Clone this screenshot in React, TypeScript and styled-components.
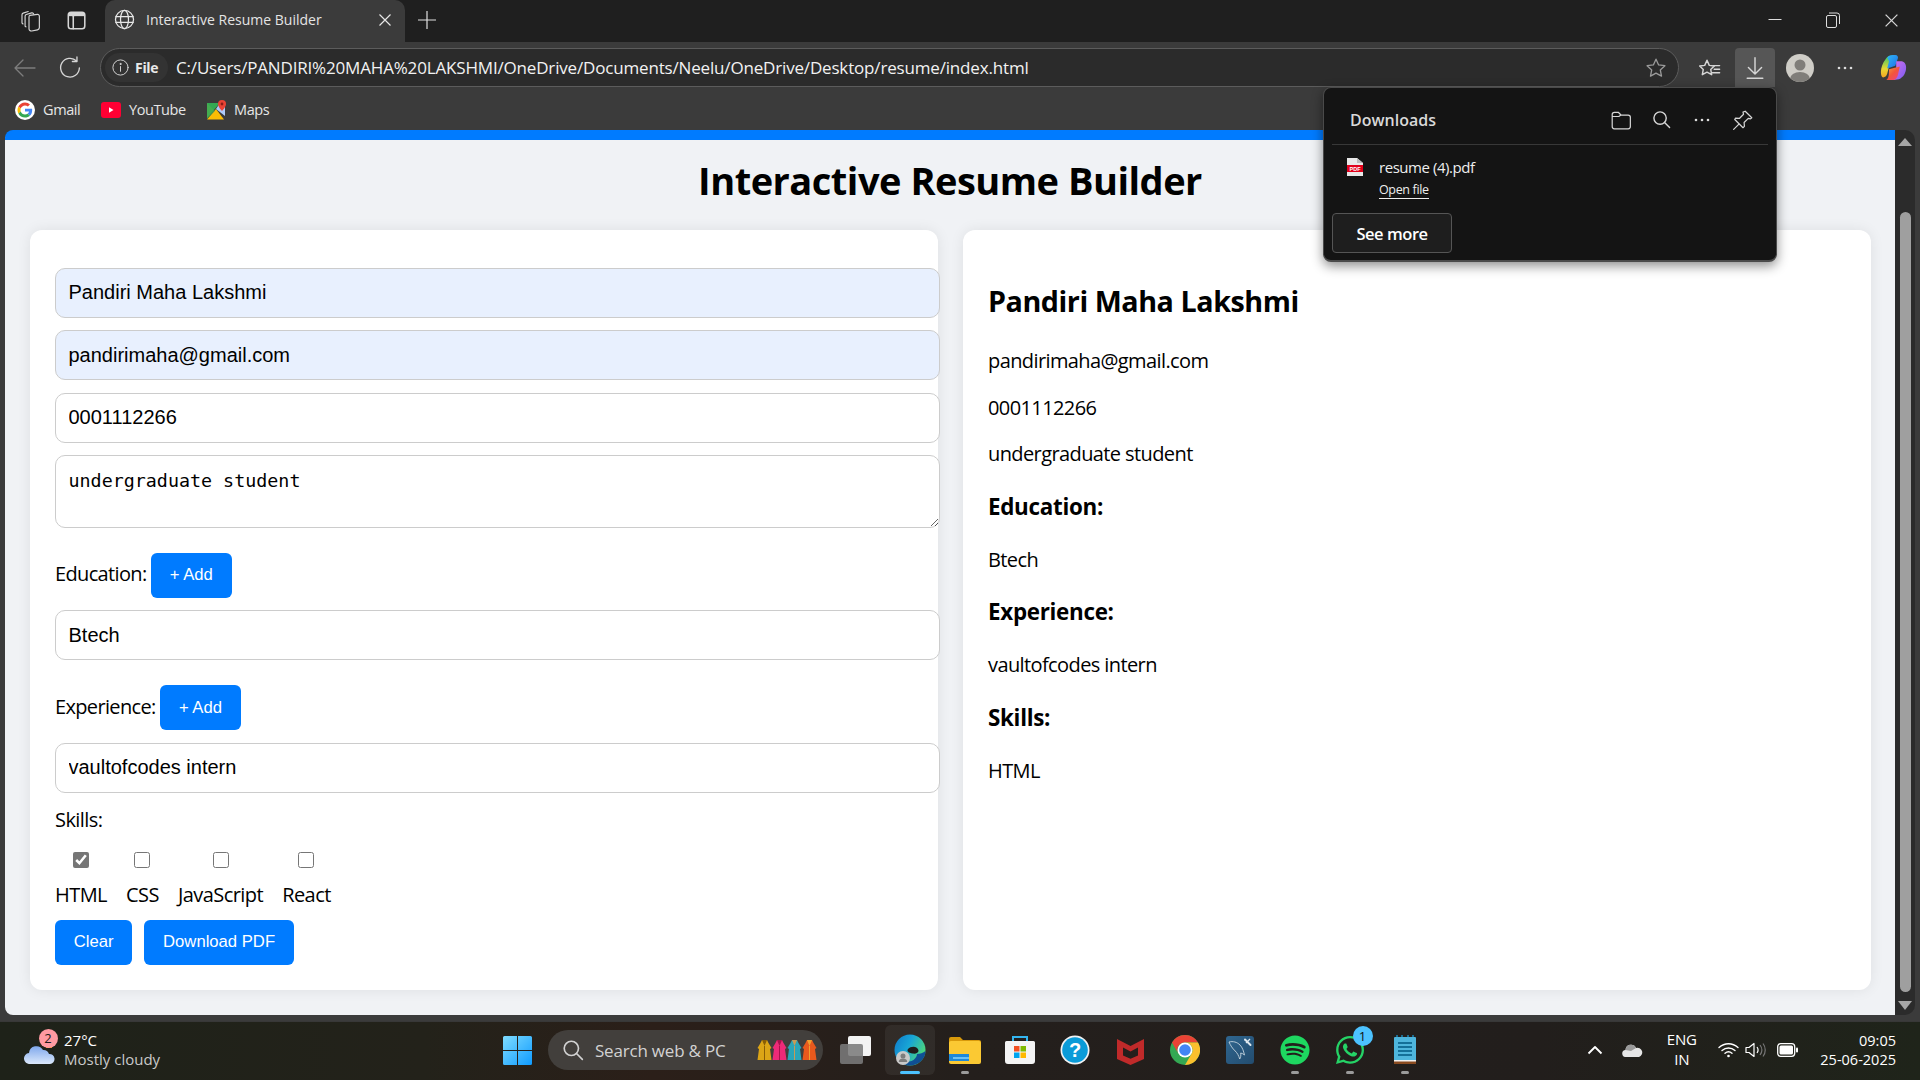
import React from "react";
import styled, { createGlobalStyle } from "styled-components";
import { FaSpotify, FaWhatsapp } from "react-icons/fa";

const UI = `"Open Sans", "Noto Sans", sans-serif`;
const ARIAL = `"Liberation Sans", Arial, sans-serif`;

const Global = createGlobalStyle`
  html, body { margin: 0; padding: 0; background: #1f1f1f; overflow: hidden; }
`;

const Screen = styled.div`
  position: relative;
  width: 1920px;
  height: 1080px;
  overflow: hidden;
  display: flex;
  flex-direction: column;
  font-family: ${UI};
  background: #3b3b3b;
`;

/* ---------- browser chrome ---------- */
const TabStrip = styled.div`
  height: 42px;
  display: flex;
  align-items: flex-start;
  background: #1f1f1f;
  padding-left: 8px;
`;
const Slot = styled.div<{ $w: number; $ml?: number }>`
  width: ${(p) => p.$w}px;
  height: 40px;
  margin-left: ${(p) => p.$ml ?? 0}px;
  flex: none;
  display: flex;
  align-items: center;
  justify-content: center;
  color: #d6d6d6;
`;
const Tab = styled.div`
  width: 300px;
  height: 42px;
  margin-left: 7px;
  padding: 0 13px 3px 9px;
  box-sizing: border-box;
  display: flex;
  align-items: center;
  gap: 11px;
  background: #3b3b3b;
  border-radius: 10px 10px 0 0;
  color: #e6e6e6;
`;
const TabTitle = styled.span`
  font-size: 14px;
  white-space: nowrap;
  color: #e4e4e4;
`;
const TabClose = styled.span`
  margin-left: auto;
  display: flex;
`;
const WindowControls = styled.div`
  margin-left: auto;
  display: flex;
`;
const Toolbar = styled.div`
  height: 47px;
  box-sizing: border-box;
  padding-top: 6px;
  display: flex;
  background: #3b3b3b;
  padding-left: 2px;
`;
const AddressPill = styled.div`
  width: 1579px;
  height: 39px;
  margin-left: 8px;
  box-sizing: border-box;
  border: 1px solid #5c5c5c;
  border-radius: 20px;
  background: #2b2b2b;
  display: flex;
  align-items: center;
  padding-left: 4px;
  padding-right: 11px;
`;
const SiteChip = styled.div`
  height: 29px;
  width: 63px;
  box-sizing: border-box;
  padding-left: 6px;
  border-radius: 15px;
  background: #333333;
  display: flex;
  align-items: center;
  gap: 5px;
  color: #d8d8d8;
`;
const ChipLabel = styled.span`
  font-size: 14px;
  font-weight: 700;
  letter-spacing: -0.3px;
  color: #e8e8e8;
`;
const UrlText = styled.span`
  margin-left: 8px;
  font-size: 17px;
  letter-spacing: -0.17px;
  color: #f2f2f2;
  white-space: nowrap;
`;
const AddressEnd = styled.span`
  margin-left: auto;
  display: flex;
  color: #9a9a9a;
`;
const ToolSlot = styled(Slot)<{ $active?: boolean }>`
  height: 39px;
  border-radius: 4px 4px 0 0;
  background: ${(p) => (p.$active ? "#565656" : "transparent")};
`;
const Bookmarks = styled.div`
  height: 41px;
  display: flex;
  align-items: center;
  padding-left: 15px;
  background: #3b3b3b;
`;
const Bookmark = styled.div<{ $w: number }>`
  width: ${(p) => p.$w}px;
  flex: none;
  display: flex;
  align-items: center;
  gap: 8px;
  font-size: 14.5px;
  letter-spacing: -0.4px;
  color: #e6e6e6;
`;

/* ---------- page ---------- */
const Viewport = styled.div`
  height: 891px;
  display: flex;
  padding-left: 5px;
  background: #3b3b3b;
`;
const Page = styled.main`
  width: 1890px;
  height: 885px;
  box-sizing: border-box;
  border-top: 10px solid #007bff;
  border-radius: 8px 0 0 8px;
  background: #f0f2f5;
  color: #000;
  overflow: hidden;
`;
const Heading = styled.h1`
  margin: 0;
  height: 90px;
  padding-bottom: 11px;
  box-sizing: border-box;
  display: flex;
  align-items: center;
  justify-content: center;
  font-size: 38px;
  font-weight: 700;
  letter-spacing: -0.5px;
`;
const Columns = styled.div`
  display: flex;
  gap: 25px;
  padding: 0 24px 0 25px;
`;
const Card = styled.section`
  flex: 1 1 0;
  min-width: 0;
  height: 760px;
  box-sizing: border-box;
  background: #fff;
  border-radius: 12px;
  box-shadow: 0 0 14px rgba(0, 0, 0, 0.08);
`;
const FormCard = styled(Card)`
  padding: 37.6px 25px 25px;
`;
const PreviewCard = styled(Card)`
  padding: 25px;
`;
const fieldCss = `
  display: block;
  width: 100%;
  box-sizing: content-box;
  padding: 12.5px;
  border: 1px solid #ccc;
  border-radius: 10px;
  margin: 0 0 12.5px;
  color: #000;
  outline: none;
`;
const TextField = styled.input<{ $filled?: boolean }>`
  ${fieldCss}
  height: 23px;
  font-family: ${ARIAL};
  font-size: 20px;
  background: ${(p) => (p.$filled ? "#e8f0fe" : "#fff")};
`;
const TextArea = styled.textarea`
  ${fieldCss}
  height: 46px;
  font-family: "DejaVu Sans Mono", "Liberation Mono", monospace;
  font-size: 18.35px;
  line-height: 23px;
  background: #fff;
  resize: vertical;
`;
const FieldLabel = styled.span`
  font-size: 20px;
  letter-spacing: -0.55px;
  line-height: 27px;
`;
const FieldRow = styled.div`
  margin: 24.75px 0 12.5px;
  display: flex;
  align-items: center;
  gap: 4.5px;

  ${FieldLabel} {
    margin-bottom: 3px;
    letter-spacing: -0.65px;
  }
`;
const Button = styled.button`
  height: 45px;
  padding: 0 18.75px;
  border: 0;
  border-radius: 6px;
  background: #007bff;
  color: #fff;
  font-family: ${ARIAL};
  font-size: 16.67px;
`;
const SkillsHeading = styled(FieldLabel)`
  display: block;
  margin-top: 13.5px;
`;
const SkillRow = styled.div`
  margin-top: 18.5px;
  display: flex;
  gap: 19px;
`;
const SkillItem = styled.label`
  display: flex;
  flex-direction: column;
  align-items: center;
  gap: 13px;
`;
const SkillBox = styled.input`
  width: 16px;
  height: 16px;
  margin: 0;
  accent-color: #767676;
`;
const ActionRow = styled.div`
  margin-top: 12px;
  display: flex;
  gap: 12px;
`;
const PreviewName = styled.h2`
  margin: 26px 0 27px;
  font-size: 28.7px;
  line-height: 40px;
  font-weight: 700;
  letter-spacing: -0.45px;
`;
const PreviewLine = styled.p`
  margin: 20px 0;
  font-size: 20px;
  line-height: 26.6px;
  letter-spacing: -0.6px;
`;
const PreviewHeading = styled.h3`
  margin: 24px 0 25px;
  font-size: 22.4px;
  line-height: 30px;
  font-weight: 700;
  letter-spacing: -0.3px;
`;

/* ---------- scrollbar ---------- */
const Track = styled.div`
  width: 20px;
  height: 885px;
  box-sizing: border-box;
  padding-top: 8px;
  display: flex;
  flex-direction: column;
  align-items: center;
  background: #2b2b2b;
  border-radius: 0 10px 10px 0;
`;
const ArrowUp = styled.div`
  width: 0;
  height: 0;
  border-left: 7px solid transparent;
  border-right: 7px solid transparent;
  border-bottom: 8px solid #a6a6a6;
`;
const ArrowDown = styled.div`
  width: 0;
  height: 0;
  margin-top: 9px;
  border-left: 7px solid transparent;
  border-right: 7px solid transparent;
  border-top: 9px solid #a6a6a6;
`;
const Thumb = styled.div`
  width: 11px;
  height: 780px;
  margin-top: 66px;
  border-radius: 6px;
  background: #9f9f9f;
`;

/* ---------- downloads flyout ---------- */
const Flyout = styled.aside`
  position: absolute;
  left: 1323px;
  top: 87px;
  width: 454px;
  height: 175px;
  box-sizing: border-box;
  padding: 0 8px;
  background: #141414;
  border: 1px solid #4a4a4a;
  border-bottom-width: 2px;
  border-radius: 8px;
  box-shadow: 0 4px 12px rgba(0, 0, 0, 0.45);
  color: #eee;
`;
const FlyoutHead = styled.header`
  height: 57px;
  box-sizing: border-box;
  display: flex;
  align-items: center;
  padding-left: 18px;
  padding-top: 7px;
  border-bottom: 1px solid #383838;
`;
const FlyoutTitle = styled.span`
  margin-top: 1px;
  font-size: 16px;
  font-weight: 600;
  letter-spacing: 0;
  color: #d9d9d9;
`;
const FlyoutTools = styled.div`
  margin-left: auto;
  margin-right: 5px;
  display: flex;
  color: #d6d6d6;
`;
const FlyoutTool = styled.span`
  width: 40.5px;
  display: flex;
  align-items: center;
  justify-content: center;
`;
const FileRow = styled.div`
  height: 68px;
  box-sizing: border-box;
  display: flex;
  gap: 16px;
  padding: 12px 0 0 15px;
`;
const FileInfo = styled.div`
  display: flex;
  flex-direction: column;
  gap: 4px;
`;
const FileName = styled.span`
  font-size: 15px;
  line-height: 20px;
  letter-spacing: -0.45px;
  color: #eee;
`;
const OpenFile = styled.span`
  align-self: flex-start;
  font-size: 12.5px;
  line-height: 17px;
  letter-spacing: -0.35px;
  color: #eee;
  border-bottom: 1px solid #eee;
`;
const SeeMore = styled.button`
  width: 120px;
  height: 40px;
  padding: 0;
  display: block;
  border: 1px solid #555;
  border-radius: 4px;
  background: #1e1e1e;
  color: #fff;
  font-family: ${UI};
  font-size: 16.5px;
  font-weight: 600;
  letter-spacing: -0.45px;
`;

/* ---------- taskbar ---------- */
const Taskbar = styled.footer`
  height: 59px;
  box-sizing: border-box;
  border-top: 1px solid #383838;
  padding-bottom: 2px;
  display: flex;
  align-items: center;
  background: linear-gradient(90deg, #1e2219 0%, #23221a 22%, #2b1f19 34%, #241f1c 50%, #221e1c 80%, #1f241a 100%);
  color: #fff;
`;
const Weather = styled.div`
  width: 490px;
  flex: none;
  display: flex;
  align-items: center;
  gap: 9px;
  padding-left: 24px;
  box-sizing: border-box;
`;
const WeatherIcon = styled.div`
  position: relative;
  width: 31px;
  height: 36px;
  box-sizing: border-box;
  padding-bottom: 4px;
  display: flex;
  align-items: flex-end;
`;
const AlertBadge = styled.span`
  position: absolute;
  left: 14.5px;
  top: -3px;
  width: 19px;
  height: 19px;
  border-radius: 50%;
  background: #ff9aa2;
  color: #1a1a1a;
  font-size: 13px;
  line-height: 19px;
  text-align: center;
`;
const WeatherText = styled.div`
  display: flex;
  flex-direction: column;
  font-size: 15px;
  line-height: 19.5px;
`;
const Dim = styled.span`
  color: #c9c9c9;
`;
const SearchBox = styled.div`
  width: 275px;
  height: 40px;
  margin-left: 3px;
  margin-right: 4.5px;
  box-sizing: border-box;
  padding: 0 6px 0 14px;
  flex: none;
  display: flex;
  align-items: center;
  gap: 11px;
  border-radius: 20px;
  background: #423f3c;
  color: #d2d2d2;
  font-size: 17px;
  letter-spacing: -0.2px;
  white-space: nowrap;
`;
const Robes = styled.span`
  margin-left: auto;
  display: flex;
`;
const AppSlot = styled.div<{ $active?: boolean }>`
  position: relative;
  width: ${(p) => (p.$active ? 50 : 55)}px;
  margin: 0 ${(p) => (p.$active ? 2.5 : 0)}px;
  height: 50px;
  flex: none;
  display: flex;
  align-items: center;
  justify-content: center;
  border-radius: 6px;
  background: ${(p) => (p.$active ? "rgba(255,255,255,.06)" : "transparent")};
`;
const RunDot = styled.span<{ $active?: boolean }>`
  position: absolute;
  left: 50%;
  bottom: 1px;
  transform: translateX(-50%);
  width: ${(p) => (p.$active ? 20 : 8)}px;
  height: 3px;
  border-radius: 2px;
  background: ${(p) => (p.$active ? "#4cc2ff" : "#9b9b9b")};
`;
const CountBadge = styled.span`
  position: absolute;
  right: 5px;
  top: 1px;
  width: 20px;
  height: 20px;
  border-radius: 50%;
  background: #4cc2ff;
  color: #111;
  font-size: 13px;
  line-height: 20px;
  text-align: center;
`;
const Tray = styled.div`
  margin-left: auto;
  padding-right: 24px;
  display: flex;
  align-items: center;
  color: #fff;
`;
const TraySlot = styled.span<{ $w: number }>`
  width: ${(p) => p.$w}px;
  display: flex;
  justify-content: center;
  flex: none;
`;
const LangBlock = styled.div`
  width: 44px;
  text-align: center;
  font-size: 15px;
  line-height: 20px;
  letter-spacing: -0.2px;
  margin: 0 11px 0 7px;
  padding-bottom: 2px;
`;
const Clock = styled.div`
  margin-left: 13.5px;
  text-align: right;
  font-size: 14.5px;
  line-height: 19.5px;
`;

/* ---------- icons ---------- */
type P = { s?: number };
const Line = ({ s = 20, children, w = 1.2 }: P & { children: React.ReactNode; w?: number }) => (
  <svg width={s} height={s} viewBox="0 0 20 20" fill="none" stroke="currentColor" strokeWidth={w} strokeLinecap="round" strokeLinejoin="round">
    {children}
  </svg>
);
const Collections = () => (
  <Line s={23} w={1}>
    <path d="M9.500 5.500l6.500-.8a1.500 1.500 0 0 1 1.700 1.500v10a2 2 0 0 1-1.600 1.900l-5 1a2 2 0 0 1-2.400-2V7a1.500 1.500 0 0 1 .8-1.500z" />
    <path d="M6 15.500 5.300 15V6.200A1.500 1.500 0 0 1 6.300 4.800L11 3.400a1.500 1.500 0 0 1 1.800 1" />
    <path d="M3.500 13 2.600 12.200V5a1.500 1.500 0 0 1 1-1.400L8 2.200" />
  </Line>
);
const VerticalTabs = () => (
  <Line s={22} w={1.4}>
    <rect x="3" y="3" width="15" height="15" rx="2.500" />
    <path d="M7.500 6.500V18" />
    <path d="M3.500 3.500h14v3h-14z" fill="currentColor" stroke="none" />
  </Line>
);
const Globe = () => (
  <Line s={21}>
    <circle cx="10" cy="10" r="8.600" />
    <ellipse cx="10" cy="10" rx="3.800" ry="8.600" />
    <path d="M1.800 7.200h16.400M1.800 12.800h16.400" />
  </Line>
);
const XMark = ({ s = 14 }: P) => (
  <svg width={s} height={s} viewBox="0 0 14 14" stroke="currentColor" strokeWidth="1.200" fill="none">
    <path d="M1.500 1.500l11 11M12.500 1.500l-11 11" />
  </svg>
);
const Plus = () => (
  <svg width="18" height="18" viewBox="0 0 18 18" stroke="#e0e0e0" strokeWidth="1.200">
    <path d="M9 0v18M0 9h18" />
  </svg>
);
const Minimize = () => (
  <svg width="14" height="14" viewBox="0 0 14 14" stroke="#ddd" strokeWidth="1">
    <path d="M0.500 6.500h13" />
  </svg>
);
const Restore = () => (
  <svg width="14" height="16" viewBox="0 0 14 16" stroke="#ddd" strokeWidth="1" fill="none">
    <rect x="0.500" y="3.500" width="10" height="12" rx="1.500" />
    <path d="M3 1h8a2.500 2.500 0 0 1 2.500 2.500V12" />
  </svg>
);
const Back = () => (
  <svg width="22" height="18" viewBox="0 0 22 18" stroke="#7d7d7d" strokeWidth="1.300" fill="none" strokeLinecap="round" strokeLinejoin="round">
    <path d="M21 9H1M9 1 1 9l8 8" />
  </svg>
);
const Reload = () => (
  <Line s={24} w={1.100}>
    <path d="M15.500 4.200A7.800 7.800 0 1 0 17.800 10" />
    <path d="M15.800 0.800v3.800H12" />
  </Line>
);
const Info = () => (
  <Line s={19} w={1}>
    <circle cx="10" cy="10" r="8" />
    <path d="M10 9v5" />
    <circle cx="10" cy="6.300" r=".6" fill="currentColor" />
  </Line>
);
const StarPath = "M10 2l2.400 5.200 5.700.7-4.200 3.900 1.100 5.600L10 14.700l-5 2.700 1.100-5.600L1.900 7.900l5.700-.7z";
const Star = () => (
  <Line s={22}>
    <path d={StarPath} />
  </Line>
);
const Favorites = () => (
  <Line s={24} w={1.200}>
    <path d="M8.500 3l1.900 4.300 4.200.5-3 2.900.8 4.400-3.900-2.100-3.900 2.100.8-4.400-3-2.900 4.200-.5z" transform="translate(-1 0.500)" />
    <path d="M13 8h5M13.500 11h4.500M12 14h6" />
  </Line>
);
const DownArrow = () => (
  <Line s={24} w={1.200}>
    <path d="M10 1.500v13M4.500 9.500l5.500 5.500 5.500-5.500M3.500 18.500h13" />
  </Line>
);
const Avatar = () => (
  <svg width="28" height="28" viewBox="0 0 28 28">
    <defs>
      <clipPath id="av">
        <circle cx="14" cy="14" r="14" />
      </clipPath>
    </defs>
    <circle cx="14" cy="14" r="14" fill="#cfcdc7" />
    <g clipPath="url(#av)" fill="#807e7a">
      <circle cx="14" cy="11" r="5.500" />
      <ellipse cx="14" cy="25" rx="10" ry="7" />
    </g>
  </svg>
);
const Dots = ({ s = 18, c = "#ddd" }: P & { c?: string }) => (
  <svg width={s} height="4" viewBox="0 0 18 4" fill={c}>
    <circle cx="3" cy="2" r="1.300" />
    <circle cx="9" cy="2" r="1.300" />
    <circle cx="15" cy="2" r="1.300" />
  </svg>
);
const Copilot = () => (
  <svg width="27" height="27" viewBox="0 0 30 30">
    <defs>
      <linearGradient id="c1" x1="0" y1="0" x2="1" y2="1">
        <stop offset="0" stopColor="#2fb7f5" />
        <stop offset="1" stopColor="#1e6ee8" />
      </linearGradient>
      <linearGradient id="c2" x1="0" y1="0" x2="0" y2="1">
        <stop offset="0" stopColor="#36c46b" />
        <stop offset=".6" stopColor="#e8d832" />
        <stop offset="1" stopColor="#f5a623" />
      </linearGradient>
      <linearGradient id="c3" x1="0" y1="0" x2="1" y2="1">
        <stop offset="0" stopColor="#d070ee" />
        <stop offset="1" stopColor="#7a5cf0" />
      </linearGradient>
      <linearGradient id="c4" x1="0" y1="0" x2="1" y2="1">
        <stop offset="0" stopColor="#f7a33c" />
        <stop offset=".5" stopColor="#f2553a" />
        <stop offset="1" stopColor="#ee3e8c" />
      </linearGradient>
    </defs>
    <path d="M1 20c0-5 2-10 5-14 1.500-2 3-4 5-4h2l-5 20c-.7 2.500-2.500 4-4.500 4C2 26 1 23.500 1 20z" fill="url(#c2)" />
    <path d="M8 4c1.500-2 3-3 6-3h3c2.500 0 3.500 2 2.800 4L17 13l-9 3 2-8z" fill="url(#c1)" />
    <path d="M18 8h5c4 0 6 3 6 7 0 6-3 11-8 13l-6 1 3-12z" fill="url(#c3)" />
    <path d="M10 17l12-3-2 9c-.7 3-3 6-6 6H7c3-2 3-7 3-12z" fill="url(#c4)" />
  </svg>
);
const GoogleG = () => (
  <svg width="20" height="20" viewBox="0 0 48 48">
    <circle cx="24" cy="24" r="24" fill="#fff" />
    <g transform="translate(6 6) scale(.75)">
      <path fill="#EA4335" d="M24 9.500c3.500 0 6.600 1.200 9.100 3.600l6.800-6.800C35.800 2.400 30.300 0 24 0 14.600 0 6.500 5.400 2.600 13.200l7.900 6.100C12.400 13.700 17.700 9.500 24 9.500z" />
      <path fill="#4285F4" d="M46.900 24.500c0-1.600-.1-3.100-.4-4.500H24v9h12.900c-.6 3-2.200 5.500-4.700 7.200l7.600 5.900c4.500-4.100 7.100-10.200 7.100-17.600z" />
      <path fill="#FBBC05" d="M10.500 28.700c-.5-1.400-.8-3-.8-4.700s.3-3.200.8-4.700l-7.900-6.100C1 16.400 0 20.100 0 24s1 7.600 2.600 10.800z" />
      <path fill="#34A853" d="M24 48c6.500 0 11.900-2.100 15.900-5.800l-7.600-5.900c-2.100 1.400-4.900 2.300-8.300 2.300-6.300 0-11.600-4.200-13.500-9.900l-7.900 6.100C6.500 42.600 14.600 48 24 48z" />
    </g>
  </svg>
);
const YouTube = () => (
  <svg width="20" height="16" viewBox="0 0 20 16">
    <rect width="20" height="16" rx="3" fill="#ff0033" />
    <path d="M8 5.300v5.400L12.500 8z" fill="#fff" />
  </svg>
);
const MapsIcon = () => (
  <svg width="19" height="20" viewBox="0 0 19 20">
    <path d="M0 3h13L0 18z" fill="#34a853" />
    <path d="M0 19.500 9 9l8 10.500z" fill="#fbbc05" />
    <path d="M0 3l8 8-8 8z" fill="#4caf50" opacity=".7" />
    <path d="M9 9l4-6h5v13z" fill="#aecbfa" />
    <path d="M15 0a4 4 0 0 0-4 4c0 3 4 7 4 7s4-4 4-7a4 4 0 0 0-4-4z" fill="#ea4335" />
    <circle cx="15" cy="4" r="1.400" fill="#8c1d18" />
  </svg>
);
const Folder = () => (
  <Line s={22} w={1.100}>
    <path d="M2 5a2 2 0 0 1 2-2h3.500L10 5.500h6.500a2 2 0 0 1 2 2V16a2 2 0 0 1-2 2H4a2 2 0 0 1-2-2zM2 6.800h6l2-1.300" />
  </Line>
);
const SearchGlass = ({ s = 20 }: P) => (
  <Line s={s} w={1.500}>
    <circle cx="8.500" cy="8.500" r="6.500" />
    <path d="M13.200 13.200 18.500 18.500" />
  </Line>
);
const Pin = () => (
  <Line s={22} w={1.100}>
    <path d="M12.500 1.500l6 6-1.200 1-2-.5-3.800 3.800.3 3.500-1.300 1.200-7.500-7.500L3.700 7.800l3.500.3L11 4.300l-.5-2z" transform="translate(-0.500 0.500)" />
    <path d="M6.300 13.700 1.500 18.500" />
  </Line>
);
const PdfFile = () => (
  <svg width="16" height="20" viewBox="0 0 16 20">
    <path d="M0 1h10l6 5v13H0z" fill="#e8e8e8" />
    <path d="M10 1l6 5h-6z" fill="#bbb" />
    <rect y="8" width="16" height="7" fill="#e2001a" />
    <text x="8" y="14" textAnchor="middle" fontSize="5.500" fill="#fff" fontFamily={ARIAL} fontWeight="700">PDF</text>
  </svg>
);
const Cloud = () => (
  <svg width="31" height="24" viewBox="0 0 31 24">
    <defs>
      <linearGradient id="cl" x1="0" y1="0" x2="0" y2="1">
        <stop offset="0" stopColor="#7fa8ec" />
        <stop offset="1" stopColor="#dbe8fb" />
      </linearGradient>
    </defs>
    <rect x="22" y="2" width="6" height="6" fill="#f08a24" />
    <path d="M6 24a5.500 5.500 0 0 1-1-11 7.500 7.500 0 0 1 14-3 6 6 0 0 1 6 4 5 5 0 0 1 1 10z" fill="url(#cl)" />
  </svg>
);
const WinLogo = () => (
  <svg width="29" height="29" viewBox="0 0 29 29">
    <defs>
      <linearGradient id="w" x1="0" y1="0" x2="1" y2="1">
        <stop offset="0" stopColor="#7fdcff" />
        <stop offset="1" stopColor="#0f9bff" />
      </linearGradient>
    </defs>
    <path d="M0 1.500A1.500 1.500 0 0 1 1.500 0H14v14H0zM15 0h12.500A1.500 1.500 0 0 1 29 1.500V14H15zM0 15h14v14H1.500A1.500 1.500 0 0 1 0 27.500zM15 15h14v12.500a1.500 1.500 0 0 1-1.500 1.500H15z" fill="url(#w)" />
  </svg>
);
const Robe = ({ c, d }: { c: string; d: string }) => (
  <svg width="15" height="22" viewBox="0 0 15 22">
    <path d="M5 1h5l1.500 3 3 5-1.500 1 1.500 11H.500L2 10 .500 9l3-5z" fill={c} />
    <path d="M5 1h5L7.500 7zM7 7h1v14H7z" fill={d} />
  </svg>
);
const TaskView = () => (
  <svg width="31" height="28" viewBox="0 0 31 28">
    <rect x="8" y="0" width="23" height="20" rx="2" fill="#f3f3f3" />
    <rect x="0" y="8" width="23" height="20" rx="2" fill="#7b7b7b" fillOpacity=".88" />
  </svg>
);
const Edge = () => (
  <svg width="32" height="32" viewBox="0 0 32 32">
    <defs>
      <linearGradient id="e1" x1="0" y1="0" x2="1" y2=".5">
        <stop offset="0" stopColor="#0f79c9" />
        <stop offset=".5" stopColor="#18a5d6" />
        <stop offset="1" stopColor="#4dd77c" />
      </linearGradient>
      <linearGradient id="e2" x1="0" y1="0" x2="1" y2="1">
        <stop offset="0" stopColor="#0c59a4" />
        <stop offset="1" stopColor="#114a8b" />
      </linearGradient>
    </defs>
    <circle cx="16" cy="16" r="15.500" fill="url(#e1)" />
    <path d="M31.500 17c0 8-7 14.500-15.500 14.500-4 0-8-2-10-5 5 2 12 2 15-2 1-1 2-3 2-4.500 3 0 6-1 8.500-3z" fill="url(#e2)" />
    <path d="M14 15c3-3.500 10-3 10.500 1.500.3 2.500-3 3.500-6 3-4-.5-6-2.500-4.500-4.500z" fill="#1f1d1c" />
    <circle cx="9" cy="24" r="7" fill="#c9c9c9" />
    <circle cx="9" cy="22" r="2.500" fill="#7d7d7d" />
    <path d="M4.800 28a4.200 3.500 0 0 1 8.400 0z" fill="#7d7d7d" />
  </svg>
);
const Explorer = () => (
  <svg width="32" height="28" viewBox="0 0 32 28">
    <path d="M0 3a2 2 0 0 1 2-2h9l3 3h16a2 2 0 0 1 2 2v3H0z" fill="#d99a0b" />
    <rect y="5" width="32" height="23" rx="2" fill="#fbc933" />
    <rect x="0" y="18" width="20" height="7" fill="#1e88d9" />
    <rect x="4" y="21" width="16" height="2" fill="#6bc1f5" />
  </svg>
);
const Store = () => (
  <svg width="30" height="30" viewBox="0 0 30 30">
    <path d="M8 7V2h14v5" fill="none" stroke="#33b5f0" strokeWidth="2" />
    <path d="M0 7.500A1.500 1.500 0 0 1 1.500 6h27A1.500 1.500 0 0 1 30 7.500V26a3 3 0 0 1-3 3H3a3 3 0 0 1-3-3z" fill="#f4f4f4" />
    <rect x="9" y="11" width="5.500" height="5.500" fill="#f25022" />
    <rect x="15.500" y="11" width="5.500" height="5.500" fill="#7fba00" />
    <rect x="9" y="17.500" width="5.500" height="5.500" fill="#00a4ef" />
    <rect x="15.500" y="17.500" width="5.500" height="5.500" fill="#ffb900" />
  </svg>
);
const Help = () => (
  <svg width="30" height="30" viewBox="0 0 30 30">
    <circle cx="15" cy="15" r="14.500" fill="#f2f2f2" />
    <circle cx="15" cy="15" r="12.800" fill="#0a9bd8" />
    <text x="15" y="22" textAnchor="middle" fontSize="20" fontWeight="700" fill="#fff" fontFamily={ARIAL}>?</text>
  </svg>
);
const McAfee = () => (
  <svg width="27" height="30" viewBox="0 0 27 30">
    <path d="M0 4l13.500 7L27 4v20l-13.500 6L0 24zM6 12.500v8l7.500 3.300 7.500-3.300v-8l-7.500 4z" fill="#c02a2a" fillRule="evenodd" />
  </svg>
);
const Chrome = () => (
  <svg width="30" height="30" viewBox="0 0 30 30">
    <circle cx="15" cy="15" r="15" fill="#34a853" />
    <path d="M15 0a15 15 0 0 1 13 7.500H15A7.500 7.500 0 0 0 8.500 19L2 7.500A15 15 0 0 1 15 0z" fill="#ea4335" />
    <path d="M28 7.500A15 15 0 0 1 15 30l6.500-11.200A7.500 7.500 0 0 0 15 7.500z" fill="#fbc02d" />
    <circle cx="15" cy="15" r="7.500" fill="#fff" />
    <circle cx="15" cy="15" r="5.800" fill="#4285f4" />
  </svg>
);
const MySqlTile = () => (
  <svg width="28" height="28" viewBox="0 0 28 28">
    <defs>
      <linearGradient id="my" x1="0" y1="0" x2="1" y2="1">
        <stop offset="0" stopColor="#2f6690" />
        <stop offset="1" stopColor="#234c6e" />
      </linearGradient>
    </defs>
    <rect width="28" height="28" rx="3" fill="url(#my)" />
    <path d="M3 6c4-1 8 0 11 3 2.500 2.500 3.500 6 4.500 10-1.200-1-2.500-1.800-3.800-2 .3 2.500 0 4.500-1 6-1-3.500-2.500-6-4.500-8C6.500 12.500 4.500 9.500 3 6z" fill="none" stroke="#c6d6e0" strokeWidth=".9" />
    <path d="M19 3.500l5.500 5.500" stroke="#dfe8ee" strokeWidth="2" strokeLinecap="round" />
    <path d="M24 3l-4 4" stroke="#dfe8ee" strokeWidth="1.200" />
  </svg>
);
const Notepad = () => (
  <svg width="22" height="30" viewBox="0 0 22 30">
    <rect y="2" width="22" height="25" rx="1" fill="#4eb5dc" />
    <rect y="26" width="22" height="3" fill="#8a4b20" />
    <rect y="25" width="22" height="1.500" fill="#f1f1f1" />
    <path d="M3 2V0M8 2V0M14 2V0M19 2V0" stroke="#1d6c8f" strokeWidth="2" />
    <path d="M4 8h14M4 12h14M4 16h14M4 20h14" stroke="#136f98" strokeWidth="1.800" />
  </svg>
);
const Chevron = () => (
  <svg width="16" height="10" viewBox="0 0 16 10" stroke="#fff" strokeWidth="1.800" fill="none" strokeLinejoin="round">
    <path d="M1.500 8.500 8 2l6.500 6.500" />
  </svg>
);
const OneDrive = () => (
  <svg width="21" height="14" viewBox="0 0 21 14">
    <path d="M4 14a3.500 3.500 0 0 1-.5-7A5.500 5.500 0 0 1 14 5a4.500 4.500 0 0 1 3 9z" fill="#e6e6e6" />
    <path d="M3.500 7A5.500 5.500 0 0 1 14 5L9 8z" fill="#9a9a9a" />
  </svg>
);
const Wifi = () => (
  <svg width="21" height="16" viewBox="0 0 21 16" stroke="#fff" fill="none" strokeWidth="1.400" strokeLinecap="round">
    <path d="M1 5.500c5.500-5 13.500-5 19 0M4 8.500c3.800-3.300 9.200-3.300 13 0M7 11.300c2-1.700 5-1.700 7 0" />
    <circle cx="10.500" cy="14" r="1.300" fill="#fff" stroke="none" />
  </svg>
);
const Volume = () => (
  <svg width="21" height="18" viewBox="0 0 21 18" fill="none" stroke="#fff" strokeWidth="1.200" strokeLinejoin="round">
    <path d="M1 6.500h3L9 2.500v13l-5-4H1z" />
    <path d="M12 6c1.300 1.800 1.300 4.200 0 6" />
    <path d="M15 4c2.300 3 2.300 7 0 10M18 2.500c3 3.800 3 9.200 0 13" stroke="#777" />
  </svg>
);
const Battery = () => (
  <svg width="21" height="14" viewBox="0 0 21 14">
    <rect x=".7" y=".7" width="17" height="12.600" rx="3" fill="none" stroke="#fff" strokeWidth="1.300" />
    <rect x="2.500" y="2.500" width="13.500" height="9" rx="1.500" fill="#fff" />
    <rect x="19" y="4.500" width="2" height="5" rx="1" fill="#fff" />
  </svg>
);

const skills = [
  { name: "HTML", checked: true },
  { name: "CSS", checked: false },
  { name: "JavaScript", checked: false },
  { name: "React", checked: false },
];

const robes = [
  ["#dca516", "#8a5e05"],
  ["#ee2a78", "#a8124c"],
  ["#2aa5b8", "#c79a55"],
  ["#e8591d", "#f0a030"],
];

export default function App() {
  return (
    <Screen>
      <Global />
      <TabStrip>
        <Slot $w={45}><Collections /></Slot>
        <Slot $w={45}><VerticalTabs /></Slot>
        <Tab>
          <Globe />
          <TabTitle>Interactive Resume Builder</TabTitle>
          <TabClose><XMark /></TabClose>
        </Tab>
        <Slot $w={44}><Plus /></Slot>
        <WindowControls>
          <Slot $w={58}><Minimize /></Slot>
          <Slot $w={58}><Restore /></Slot>
          <Slot $w={58}><XMark s={15} /></Slot>
        </WindowControls>
      </TabStrip>

      <Toolbar>
        <ToolSlot $w={45}><Back /></ToolSlot>
        <ToolSlot $w={45}><Reload /></ToolSlot>
        <AddressPill>
          <SiteChip>
            <Info />
            <ChipLabel>File</ChipLabel>
          </SiteChip>
          <UrlText>C:/Users/PANDIRI%20MAHA%20LAKSHMI/OneDrive/Documents/Neelu/OneDrive/Desktop/resume/index.html</UrlText>
          <AddressEnd><Star /></AddressEnd>
        </AddressPill>
        <ToolSlot $w={45} $ml={8}><Favorites /></ToolSlot>
        <ToolSlot $w={40} $ml={3} $active><DownArrow /></ToolSlot>
        <ToolSlot $w={50}><Avatar /></ToolSlot>
        <ToolSlot $w={40}><Dots /></ToolSlot>
        <ToolSlot $w={50} $ml={3}><Copilot /></ToolSlot>
      </Toolbar>

      <Bookmarks>
        <Bookmark $w={86}><GoogleG />Gmail</Bookmark>
        <Bookmark $w={106}><YouTube />YouTube</Bookmark>
        <Bookmark $w={80}><MapsIcon />Maps</Bookmark>
      </Bookmarks>

      <Viewport>
        <Page>
          <Heading>Interactive Resume Builder</Heading>
          <Columns>
            <FormCard>
              <TextField $filled readOnly value="Pandiri Maha Lakshmi" />
              <TextField $filled readOnly value="pandirimaha@gmail.com" />
              <TextField readOnly value="0001112266" />
              <TextArea readOnly value="undergraduate student" />
              <FieldRow>
                <FieldLabel>Education:</FieldLabel>
                <Button>+ Add</Button>
              </FieldRow>
              <TextField readOnly value="Btech" />
              <FieldRow>
                <FieldLabel>Experience:</FieldLabel>
                <Button>+ Add</Button>
              </FieldRow>
              <TextField readOnly value="vaultofcodes intern" />
              <SkillsHeading>Skills:</SkillsHeading>
              <SkillRow>
                {skills.map((s) => (
                  <SkillItem key={s.name}>
                    <SkillBox type="checkbox" readOnly checked={s.checked} />
                    <FieldLabel>{s.name}</FieldLabel>
                  </SkillItem>
                ))}
              </SkillRow>
              <ActionRow>
                <Button>Clear</Button>
                <Button>Download PDF</Button>
              </ActionRow>
            </FormCard>
            <PreviewCard>
              <PreviewName>Pandiri Maha Lakshmi</PreviewName>
              <PreviewLine>pandirimaha@gmail.com</PreviewLine>
              <PreviewLine>0001112266</PreviewLine>
              <PreviewLine>undergraduate student</PreviewLine>
              <PreviewHeading>Education:</PreviewHeading>
              <PreviewLine>Btech</PreviewLine>
              <PreviewHeading>Experience:</PreviewHeading>
              <PreviewLine>vaultofcodes intern</PreviewLine>
              <PreviewHeading>Skills:</PreviewHeading>
              <PreviewLine>HTML</PreviewLine>
            </PreviewCard>
          </Columns>
        </Page>
        <Track>
          <ArrowUp />
          <Thumb />
          <ArrowDown />
        </Track>
      </Viewport>

      <Taskbar>
        <Weather>
          <WeatherIcon>
            <Cloud />
            <AlertBadge>2</AlertBadge>
          </WeatherIcon>
          <WeatherText>
            <span>27°C</span>
            <Dim>Mostly cloudy</Dim>
          </WeatherText>
        </Weather>
        <AppSlot><WinLogo /></AppSlot>
        <SearchBox>
          <SearchGlass s={22} />
          Search web &amp; PC
          <Robes>
            {robes.map(([c, d]) => (
              <Robe key={c} c={c} d={d} />
            ))}
          </Robes>
        </SearchBox>
        <AppSlot><TaskView /></AppSlot>
        <AppSlot $active><Edge /><RunDot $active /></AppSlot>
        <AppSlot><Explorer /><RunDot /></AppSlot>
        <AppSlot><Store /></AppSlot>
        <AppSlot><Help /></AppSlot>
        <AppSlot><McAfee /></AppSlot>
        <AppSlot><Chrome /></AppSlot>
        <AppSlot><MySqlTile /></AppSlot>
        <AppSlot><FaSpotify size={30} color="#1ed760" /><RunDot /></AppSlot>
        <AppSlot><FaWhatsapp size={32} color="#25d366" /><CountBadge>1</CountBadge><RunDot /></AppSlot>
        <AppSlot><Notepad /><RunDot /></AppSlot>
        <Tray>
          <TraySlot $w={36}><Chevron /></TraySlot>
          <TraySlot $w={40}><OneDrive /></TraySlot>
          <LangBlock>ENG<br />IN</LangBlock>
          <TraySlot $w={27}><Wifi /></TraySlot>
          <TraySlot $w={27}><Volume /></TraySlot>
          <TraySlot $w={38}><Battery /></TraySlot>
          <Clock>09:05<br />25-06-2025</Clock>
        </Tray>
      </Taskbar>

      <Flyout>
        <FlyoutHead>
          <FlyoutTitle>Downloads</FlyoutTitle>
          <FlyoutTools>
            <FlyoutTool><Folder /></FlyoutTool>
            <FlyoutTool><SearchGlass s={19} /></FlyoutTool>
            <FlyoutTool><Dots c="#ddd" /></FlyoutTool>
            <FlyoutTool><Pin /></FlyoutTool>
          </FlyoutTools>
        </FlyoutHead>
        <FileRow>
          <PdfFile />
          <FileInfo>
            <FileName>resume (4).pdf</FileName>
            <OpenFile>Open file</OpenFile>
          </FileInfo>
        </FileRow>
        <SeeMore>See more</SeeMore>
      </Flyout>
    </Screen>
  );
}
